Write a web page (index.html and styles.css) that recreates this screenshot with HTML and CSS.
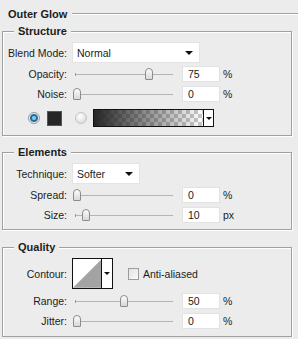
FILE: index.html
```html
<!DOCTYPE html>
<html>
<head>
  <title>Outer Glow</title>
  <link rel="stylesheet" href="styles.css">
</head>
<body>
  <div class="panel">
    <div class="panel-title"><span>Outer Glow</span><i class="rule"></i></div>

    <fieldset class="group group-structure">
      <legend>Structure</legend>
      <div class="row row-tall">
        <label>Blend Mode:</label>
        <div class="select select-blend"><span>Normal</span><i class="caret"></i></div>
      </div>
      <div class="row">
        <label>Opacity:</label>
        <div class="slider"><span class="thumb" style="left: 73px"></span></div>
        <div class="num">75</div><span class="unit">%</span>
      </div>
      <div class="row">
        <label>Noise:</label>
        <div class="slider"><span class="thumb" style="left: 1px"></span></div>
        <div class="num">0</div><span class="unit">%</span>
      </div>
      <div class="row row-color">
        <span class="radio radio-on"></span>
        <span class="swatch"></span>
        <span class="radio"></span>
        <div class="gradient"><span class="gradient-fill"></span><span class="gradient-btn"><i class="caret caret-small"></i></span></div>
      </div>
    </fieldset>

    <fieldset class="group group-elements">
      <legend>Elements</legend>
      <div class="row row-tall">
        <label>Technique:</label>
        <div class="select select-technique"><span>Softer</span><i class="caret"></i></div>
      </div>
      <div class="row">
        <label>Spread:</label>
        <div class="slider"><span class="thumb" style="left: 1px"></span></div>
        <div class="num">0</div><span class="unit">%</span>
      </div>
      <div class="row">
        <label>Size:</label>
        <div class="slider"><span class="thumb" style="left: 10px"></span></div>
        <div class="num">10</div><span class="unit">px</span>
      </div>
    </fieldset>

    <fieldset class="group group-quality">
      <legend>Quality</legend>
      <div class="row row-contour">
        <label>Contour:</label>
        <div class="contour">
          <svg class="contour-curve" width="29" height="29" viewBox="0 0 29 29"><polygon points="0,29 29,0 29,29" fill="#a3a3a3"/></svg>
          <span class="contour-btn"><i class="caret caret-small"></i></span>
        </div>
        <span class="checkbox"></span>
        <span class="check-label">Anti-aliased</span>
      </div>
      <div class="row">
        <label>Range:</label>
        <div class="slider"><span class="thumb" style="left: 48px"></span></div>
        <div class="num">50</div><span class="unit">%</span>
      </div>
      <div class="row">
        <label>Jitter:</label>
        <div class="slider"><span class="thumb" style="left: 1px"></span></div>
        <div class="num">0</div><span class="unit">%</span>
      </div>
    </fieldset>
  </div>
</body>
</html>
```

FILE: styles.css
```css
body {
  margin: 0;
  background-color: #ececec;
  font-family: "Liberation Sans", Arial, sans-serif;
  font-size: 10.5px;
  color: #1c1c1c;
}

.panel {
  padding-top: 7px;
}

.panel-title {
  display: flex;
  align-items: center;
  height: 14px;
  padding-left: 8px;
  font-weight: bold;
  font-size: 11px;
}

.panel-title .rule {
  flex: 1;
  margin-left: 5px;
  height: 0;
  border-top: 1px solid #a0a0a0;
  border-bottom: 1px solid #fff;
}

.group {
  margin: 4px 6px 0 2px;
  padding: 0 0 7px 0;
  border: 1px solid #a0a0a0;
  box-shadow: inset 1px 1px 0 #fff, 1px 1px 0 #fff;
}

.group legend {
  margin-left: 11px;
  padding: 0 4px;
  font-weight: bold;
  font-size: 11px;
  line-height: 13px;
  background-color: #ececec;
}

.group-elements {
  margin-top: 10px;
  padding-bottom: 4px;
}

.group-quality {
  margin-top: 11px;
  padding-bottom: 5px;
}

.row {
  display: flex;
  align-items: center;
  height: 20px;
}

.row label {
  width: 64px;
  margin-right: 5px;
  text-align: right;
}

.row-tall {
  height: 21px;
  margin-top: 4px;
  margin-bottom: 1px;
}

.select {
  display: flex;
  align-items: center;
  justify-content: space-between;
  height: 21px;
  box-sizing: border-box;
  padding: 0 6px 0 4px;
  background-color: #fff;
  border: 1px solid #e4e4e4;
}

.select-blend {
  width: 128px;
}

.select-technique {
  width: 68px;
}

.caret {
  width: 0;
  height: 0;
  border-left: 4px solid transparent;
  border-right: 4px solid transparent;
  border-top: 4px solid #111;
}

.caret-small {
  border-left-width: 3px;
  border-right-width: 3px;
  border-top-width: 3px;
}

.slider {
  position: relative;
  width: 102px;
  height: 12px;
  margin-right: 8px;
}

.slider::before {
  content: "";
  position: absolute;
  left: 3px;
  right: 1px;
  top: 6px;
  border-top: 1px solid #b4b4b4;
}

.slider::after {
  content: "";
  position: absolute;
  left: 3px;
  top: 5px;
  height: 3px;
  border-left: 1px solid #9a9a9a;
}

.thumb {
  position: absolute;
  top: 0;
  width: 6px;
  height: 10px;
  border: 1px solid #8c8c8c;
  border-radius: 4px 4px 1px 1px;
  background: linear-gradient(#fdfdfd, #d8d8d8);
  z-index: 1;
}

.num {
  width: 38px;
  height: 16px;
  box-sizing: border-box;
  padding-left: 5px;
  line-height: 15px;
  background-color: #fff;
  border: 1px solid #e2e2e2;
}

.unit {
  margin-left: 3px;
}

.row-color {
  height: 20px;
  margin-top: 4px;
  padding-left: 25px;
}

.radio {
  width: 10px;
  height: 10px;
  border-radius: 50%;
  border: 1px solid #c4c4c4;
  background: radial-gradient(circle at 40% 35%, #ffffff, #d2d2d2);
}

.radio-on {
  background: radial-gradient(circle, #8ec3e6 0 1.5px, #1f6ea6 2.5px 3.5px, #e8e8e8 4.5px);
  border-color: #9a9a9a;
}

.swatch {
  width: 13px;
  height: 13px;
  margin-left: 7px;
  margin-right: 13px;
  background-color: #262626;
  border: 1px solid #555;
}

.gradient {
  display: flex;
  width: 121px;
  height: 18px;
  box-sizing: border-box;
  margin-left: 6px;
  border: 1px solid #111;
}

.gradient-fill {
  flex: 1;
  background:
    linear-gradient(to right, rgba(38, 38, 38, 1), rgba(38, 38, 38, 0)),
    repeating-conic-gradient(#c9c9c9 0 25%, #fff 0 50%) 0 0 / 8px 8px;
}

.gradient-btn {
  display: flex;
  align-items: center;
  justify-content: center;
  width: 9px;
  border-left: 1px solid #111;
  background-color: #fff;
}

.row-contour {
  height: 31px;
  margin-top: 4px;
  margin-bottom: 2px;
}

.contour {
  display: flex;
  width: 41px;
  height: 31px;
  box-sizing: border-box;
  border: 1px solid #111;
  background-color: #fff;
}

.contour-btn {
  display: flex;
  align-items: center;
  justify-content: center;
  width: 10px;
  border-left: 1px solid #111;
}

.checkbox {
  width: 9px;
  height: 10px;
  margin-left: 15px;
  border: 1px solid #9c9c9c;
  background: linear-gradient(135deg, #e2e2e2, #fafafa);
}

.check-label {
  margin-left: 4px;
}
```
